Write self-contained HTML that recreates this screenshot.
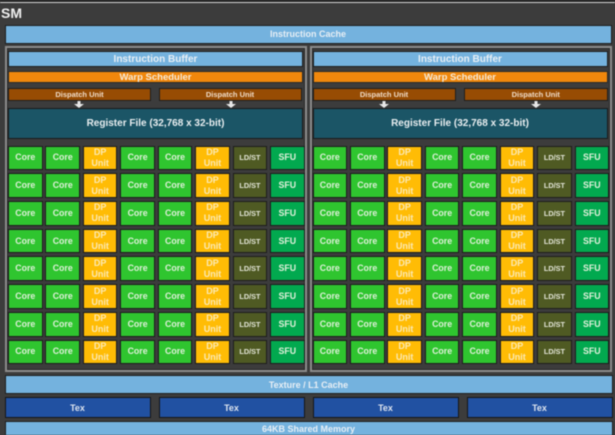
<!DOCTYPE html>
<html><head><meta charset="utf-8">
<style>
html,body{margin:0;padding:0;background:#3c3c3c}
#r{position:relative;width:615px;height:435px;overflow:hidden;background:#3c3c3c;font-family:"Liberation Sans",sans-serif;font-weight:bold;color:#f0f0f0;filter:blur(.4px)}
#r>div{position:absolute;box-sizing:border-box;display:flex;align-items:center;justify-content:center;text-align:center}
.bl{background:#74b2de;border:1px solid #1e1e1e;color:#e8eff5}
.or{background:#f0870c;border:1px solid #2a2a2a;font-size:9.5px;color:#f5ead8}
.di{background:#974c03;border:1px solid #1e1e1e;font-size:7.5px;color:#f0dcc8}
.rf{background:#1b5566;border:1px solid #1a1a1a;font-size:10px;color:#e8eef0}
.tx{background:#2151a2;border:1px solid #161616;font-size:9px;color:#dde4ef}
.pn{border:2px solid #8c8c8c;outline:1px solid #2a2a2a;outline-offset:-3px}
#r>.g{display:grid;align-items:stretch;justify-content:start;justify-items:stretch;grid-template-columns:repeat(8,34.6px);grid-auto-rows:24.7px;column-gap:2.85px;row-gap:3.05px}
.g i{font-style:normal;box-sizing:border-box;display:flex;align-items:center;justify-content:center;text-align:center;border:1px solid #1c1c1c;font-size:8.8px;line-height:11px;color:#dff0da}
.c{background:#2fc52f}
.d{background:#ffbc05;color:#fbe9b4!important;font-size:9px!important}
.l{background:#4f5a23;font-size:7.3px!important;color:#e4e6d8!important}
.s{background:#02a94f}
</style></head><body>
<div id="r">
<div style="left:0;top:2px;width:615px;height:1px;background:#d8d8d8"></div>
<div style="left:0;top:0;width:615px;height:2px;background:#222"></div>
<div style="left:1px;top:4px;width:24px;height:17px;font-size:14px;color:#f0f0f0;justify-content:flex-start">SM</div>
<div class="bl" style="left:4.5px;top:24.5px;width:607px;height:19px;font-size:9px">Instruction Cache</div>

<div class="pn" style="left:5px;top:46px;width:302px;height:326px"></div>
<div class="pn" style="left:310px;top:46px;width:302px;height:326px"></div>

<div class="bl" style="left:8px;top:51px;width:295px;height:16px;font-size:10px">Instruction Buffer</div>
<div class="or" style="left:8px;top:71px;width:295px;height:12px">Warp Scheduler</div>
<div class="di" style="left:8px;top:88px;width:143px;height:13px">Dispatch Unit</div>
<div class="di" style="left:158.5px;top:88px;width:143px;height:13px">Dispatch Unit</div>
<div class="rf" style="left:8px;top:107.5px;width:295px;height:31px">Register File (32,768 x 32-bit)</div>

<div class="bl" style="left:312.5px;top:51px;width:295px;height:16px;font-size:10px">Instruction Buffer</div>
<div class="or" style="left:312.5px;top:71px;width:295px;height:12px">Warp Scheduler</div>
<div class="di" style="left:312.5px;top:88px;width:143px;height:13px">Dispatch Unit</div>
<div class="di" style="left:464px;top:88px;width:143.5px;height:13px">Dispatch Unit</div>
<div class="rf" style="left:312.5px;top:107.5px;width:295px;height:31px">Register File (32,768 x 32-bit)</div>

<div style="left:73px;top:101px;width:12px;height:7px"><svg width="12" height="7"><path d="M4.500 0h3v3h3.500L6 7 1 3h3.500z" fill="#e8e8e8"/></svg></div>
<div style="left:224.500px;top:101px;width:12px;height:7px"><svg width="12" height="7"><path d="M4.500 0h3v3h3.500L6 7 1 3h3.500z" fill="#e8e8e8"/></svg></div>
<div style="left:378px;top:101px;width:12px;height:7px"><svg width="12" height="7"><path d="M4.500 0h3v3h3.500L6 7 1 3h3.500z" fill="#e8e8e8"/></svg></div>
<div style="left:529.500px;top:101px;width:12px;height:7px"><svg width="12" height="7"><path d="M4.500 0h3v3h3.500L6 7 1 3h3.500z" fill="#e8e8e8"/></svg></div>

<div class="g" style="left:8px;top:145.500px">
<i class="c">Core</i><i class="c">Core</i><i class="d">DP<br>Unit</i><i class="c">Core</i><i class="c">Core</i><i class="d">DP<br>Unit</i><i class="l">LD/ST</i><i class="s">SFU</i>
<i class="c">Core</i><i class="c">Core</i><i class="d">DP<br>Unit</i><i class="c">Core</i><i class="c">Core</i><i class="d">DP<br>Unit</i><i class="l">LD/ST</i><i class="s">SFU</i>
<i class="c">Core</i><i class="c">Core</i><i class="d">DP<br>Unit</i><i class="c">Core</i><i class="c">Core</i><i class="d">DP<br>Unit</i><i class="l">LD/ST</i><i class="s">SFU</i>
<i class="c">Core</i><i class="c">Core</i><i class="d">DP<br>Unit</i><i class="c">Core</i><i class="c">Core</i><i class="d">DP<br>Unit</i><i class="l">LD/ST</i><i class="s">SFU</i>
<i class="c">Core</i><i class="c">Core</i><i class="d">DP<br>Unit</i><i class="c">Core</i><i class="c">Core</i><i class="d">DP<br>Unit</i><i class="l">LD/ST</i><i class="s">SFU</i>
<i class="c">Core</i><i class="c">Core</i><i class="d">DP<br>Unit</i><i class="c">Core</i><i class="c">Core</i><i class="d">DP<br>Unit</i><i class="l">LD/ST</i><i class="s">SFU</i>
<i class="c">Core</i><i class="c">Core</i><i class="d">DP<br>Unit</i><i class="c">Core</i><i class="c">Core</i><i class="d">DP<br>Unit</i><i class="l">LD/ST</i><i class="s">SFU</i>
<i class="c">Core</i><i class="c">Core</i><i class="d">DP<br>Unit</i><i class="c">Core</i><i class="c">Core</i><i class="d">DP<br>Unit</i><i class="l">LD/ST</i><i class="s">SFU</i>
</div>
<div class="g" style="left:312.500px;top:145.500px">
<i class="c">Core</i><i class="c">Core</i><i class="d">DP<br>Unit</i><i class="c">Core</i><i class="c">Core</i><i class="d">DP<br>Unit</i><i class="l">LD/ST</i><i class="s">SFU</i>
<i class="c">Core</i><i class="c">Core</i><i class="d">DP<br>Unit</i><i class="c">Core</i><i class="c">Core</i><i class="d">DP<br>Unit</i><i class="l">LD/ST</i><i class="s">SFU</i>
<i class="c">Core</i><i class="c">Core</i><i class="d">DP<br>Unit</i><i class="c">Core</i><i class="c">Core</i><i class="d">DP<br>Unit</i><i class="l">LD/ST</i><i class="s">SFU</i>
<i class="c">Core</i><i class="c">Core</i><i class="d">DP<br>Unit</i><i class="c">Core</i><i class="c">Core</i><i class="d">DP<br>Unit</i><i class="l">LD/ST</i><i class="s">SFU</i>
<i class="c">Core</i><i class="c">Core</i><i class="d">DP<br>Unit</i><i class="c">Core</i><i class="c">Core</i><i class="d">DP<br>Unit</i><i class="l">LD/ST</i><i class="s">SFU</i>
<i class="c">Core</i><i class="c">Core</i><i class="d">DP<br>Unit</i><i class="c">Core</i><i class="c">Core</i><i class="d">DP<br>Unit</i><i class="l">LD/ST</i><i class="s">SFU</i>
<i class="c">Core</i><i class="c">Core</i><i class="d">DP<br>Unit</i><i class="c">Core</i><i class="c">Core</i><i class="d">DP<br>Unit</i><i class="l">LD/ST</i><i class="s">SFU</i>
<i class="c">Core</i><i class="c">Core</i><i class="d">DP<br>Unit</i><i class="c">Core</i><i class="c">Core</i><i class="d">DP<br>Unit</i><i class="l">LD/ST</i><i class="s">SFU</i>
</div>

<div class="bl" style="left:4.500px;top:375px;width:608px;height:19px;font-size:9px">Texture / L1 Cache</div>
<div class="tx" style="left:4.500px;top:397px;width:146px;height:21px">Tex</div>
<div class="tx" style="left:158.500px;top:397px;width:146px;height:21px">Tex</div>
<div class="tx" style="left:312.500px;top:397px;width:146px;height:21px">Tex</div>
<div class="tx" style="left:466.500px;top:397px;width:146px;height:21px">Tex</div>
<div class="bl" style="left:4.500px;top:421px;width:608px;height:16px;font-size:9px">64KB Shared Memory</div>
</div>
</body></html>
